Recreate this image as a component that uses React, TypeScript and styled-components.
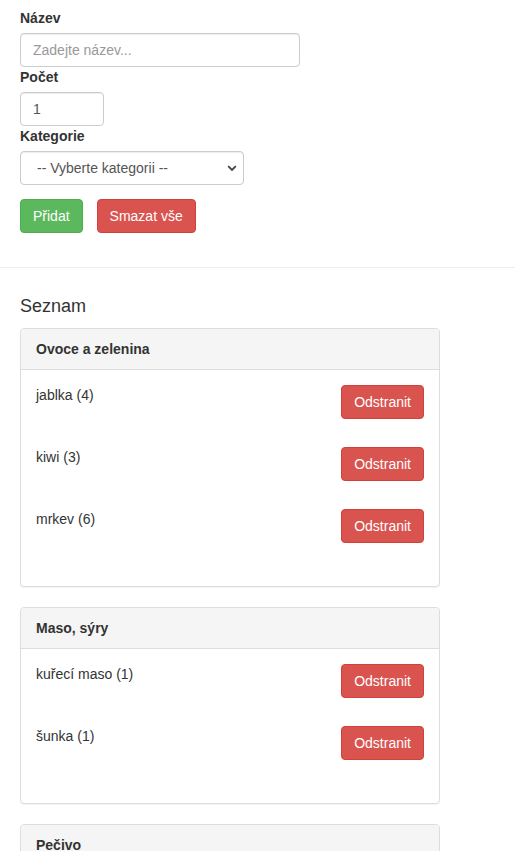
import React from "react";
import styled, { createGlobalStyle } from "styled-components";

const Global = createGlobalStyle`
  html, body { margin: 0; padding: 0; background: #fff; }
  body {
    font-family: "Liberation Sans", Arial, Helvetica, sans-serif;
    font-size: 14px;
    line-height: 1.42857143;
    color: #333;
  }
  * { box-sizing: border-box; }
`;

const Page = styled.div`
  display: flex;
  flex-direction: column;
`;

const FormSection = styled.form`
  display: flex;
  flex-direction: column;
  padding: 8px 20px 0;
`;

const Label = styled.label`
  display: block;
  font-weight: bold;
  margin-bottom: 5px;
`;

const Field = styled.div`
  display: flex;
  flex-direction: column;
  align-items: flex-start;
`;

const Input = styled.input<{ $w: number }>`
  width: ${(p) => p.$w}px;
  height: 34px;
  padding: 6px 12px;
  font-family: inherit;
  font-size: 14px;
  line-height: 1.42857143;
  color: #555;
  background: #fff;
  border: 1px solid #ccc;
  border-radius: 4px;
  box-shadow: inset 0 1px 1px rgba(0, 0, 0, 0.075);
  outline: none;
  &::placeholder { color: #999; }
  &::-webkit-inner-spin-button,
  &::-webkit-outer-spin-button { -webkit-appearance: none; margin: 0; }
`;

const SelectWrap = styled.div`
  position: relative;
  width: 224px;
`;

const Select = styled.select`
  width: 100%;
  height: 34px;
  padding: 6px 12px 6px 16px;
  font-family: inherit;
  font-size: 14px;
  color: #555;
  background: #fff;
  border: 1px solid #ccc;
  border-radius: 4px;
  box-shadow: inset 0 1px 1px rgba(0, 0, 0, 0.075);
  appearance: none;
  -webkit-appearance: none;
  outline: none;
`;

const Chevron = styled.svg`
  position: absolute;
  right: 7px;
  top: 14px;
  width: 10px;
  height: 7px;
  pointer-events: none;
`;

const ButtonRow = styled.div`
  display: flex;
  gap: 14px;
  margin-top: 14px;
`;

const Btn = styled.button<{ $variant: "success" | "danger" }>`
  display: inline-block;
  height: 34px;
  padding: 6px 12px;
  font-family: inherit;
  font-size: 14px;
  line-height: 20px;
  color: #fff;
  border-radius: 4px;
  cursor: pointer;
  white-space: nowrap;
  background: ${(p) => (p.$variant === "success" ? "#5cb85c" : "#d9534f")};
  border: 1px solid ${(p) => (p.$variant === "success" ? "#4cae4c" : "#d43f3a")};
`;

const Divider = styled.hr`
  width: 100%;
  margin: 34px 0 0;
  border: 0;
  border-top: 1px solid #eee;
`;

const ListSection = styled.section`
  padding: 29px 20px 0;
  display: flex;
  flex-direction: column;
  width: 460px;
`;

const Heading = styled.h4`
  margin: 0 0 11px;
  font-size: 18px;
  font-weight: 500;
  line-height: 1.1;
  color: #333;
`;

const Panel = styled.div`
  width: 420px;
  margin-bottom: 20px;
  background: #fff;
  border: 1px solid #ddd;
  border-radius: 4px;
  box-shadow: 0 1px 1px rgba(0, 0, 0, 0.05);
`;

const PanelHeading = styled.div`
  padding: 10px 15px;
  background: #f5f5f5;
  border-bottom: 1px solid #ddd;
  border-top-left-radius: 3px;
  border-top-right-radius: 3px;
  font-weight: bold;
  color: #333;
`;

const PanelBody = styled.div`
  padding: 15px;
  display: flex;
  flex-direction: column;
`;

const Item = styled.div`
  display: flex;
  justify-content: space-between;
  align-items: flex-start;
  padding-bottom: 28px;
`;

const ItemText = styled.span`
  color: #333;
`;

const categories = [
  {
    name: "Ovoce a zelenina",
    items: [
      { name: "jablka", count: 4 },
      { name: "kiwi", count: 3 },
      { name: "mrkev", count: 6 },
    ],
  },
  {
    name: "Maso, sýry",
    items: [
      { name: "kuřecí maso", count: 1 },
      { name: "šunka", count: 1 },
    ],
  },
  {
    name: "Pečivo",
    items: [
      { name: "rohlíky", count: 10 },
      { name: "chléb", count: 1 },
    ],
  },
];

export default function App() {
  return (
    <Page>
      <Global />
      <FormSection onSubmit={(e) => e.preventDefault()}>
        <Field>
          <Label>Název</Label>
          <Input $w={280} type="text" placeholder="Zadejte název..." />
        </Field>
        <Field>
          <Label>Počet</Label>
          <Input $w={84} type="number" defaultValue={1} />
        </Field>
        <Field>
          <Label>Kategorie</Label>
          <SelectWrap>
            <Select defaultValue="">
              <option value="">-- Vyberte kategorii --</option>
              <option>Ovoce a zelenina</option>
              <option>Maso, sýry</option>
              <option>Pečivo</option>
            </Select>
            <Chevron viewBox="0 0 10 7">
              <path d="M1.2 1.2 L5 5 L8.8 1.2" fill="none" stroke="#444" strokeWidth="1.8" />
            </Chevron>
          </SelectWrap>
        </Field>
        <ButtonRow>
          <Btn $variant="success" type="button">Přidat</Btn>
          <Btn $variant="danger" type="button">Smazat vše</Btn>
        </ButtonRow>
      </FormSection>
      <Divider />
      <ListSection>
        <Heading>Seznam</Heading>
        {categories.map((c) => (
          <Panel key={c.name}>
            <PanelHeading>{c.name}</PanelHeading>
            <PanelBody>
              {c.items.map((it) => (
                <Item key={it.name}>
                  <ItemText>
                    {it.name} ({it.count})
                  </ItemText>
                  <Btn $variant="danger" type="button">Odstranit</Btn>
                </Item>
              ))}
            </PanelBody>
          </Panel>
        ))}
      </ListSection>
    </Page>
  );
}
